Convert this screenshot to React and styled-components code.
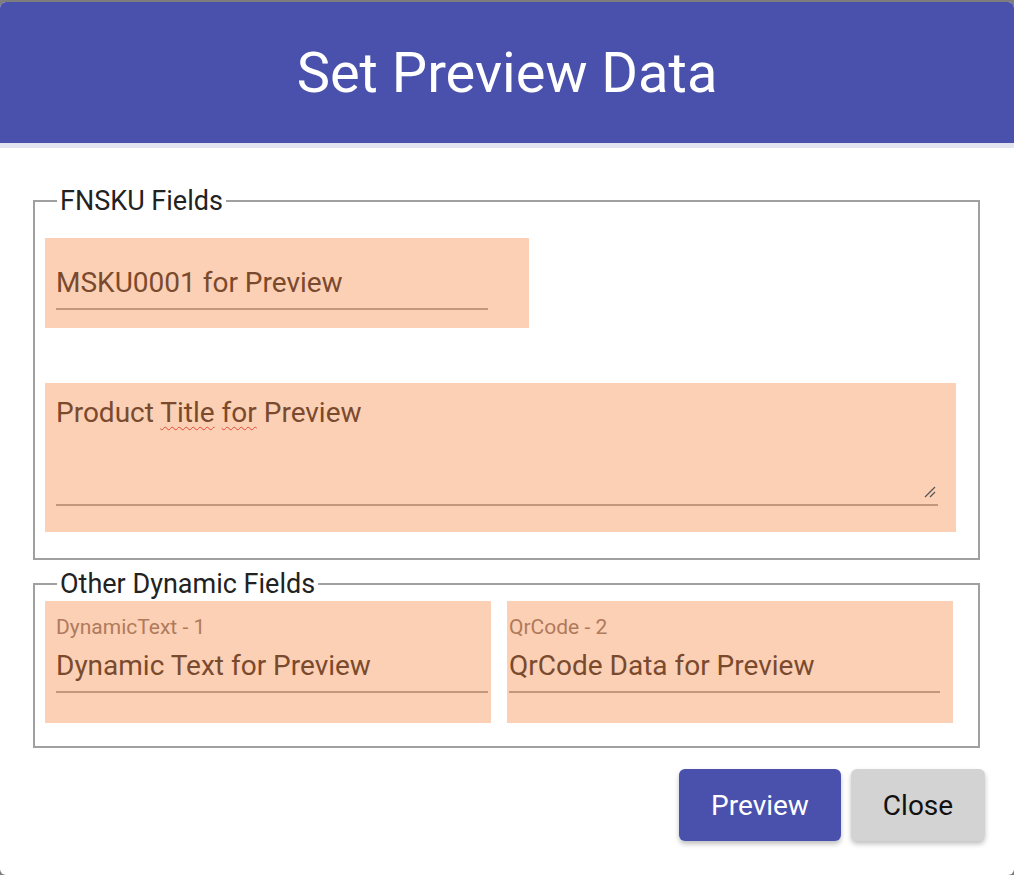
import React from 'react';
import styled, {createGlobalStyle} from 'styled-components';

const Global = createGlobalStyle`
  body {
    margin: 0;
    background: #7d7d7d;
    font-family: Roboto, "Liberation Sans", sans-serif;
  }
`;

const Dialog = styled.div`
  box-sizing: border-box;
  width: 1014px;
  height: 873px;
  margin-top: 2px;
  background: #fff;
  border-radius: 6px;
  overflow: hidden;
  display: flex;
  flex-direction: column;
`;

const Header = styled.header`
  height: 141px;
  background: #4a51ad;
  color: #fff;
  display: flex;
  align-items: center;
  justify-content: center;
  font-size: 56px;
  border-bottom: 5px solid #e1e4ee;
`;

const Body = styled.div`
  padding: 40px 34px 0 33px;
  display: flex;
  flex-direction: column;
  gap: 11px;
`;

const Group = styled.fieldset`
  margin: 0;
  border: 2px solid #a0a0a0;
  padding: ${(p) => p.$pad};
  display: flex;
  flex-direction: ${(p) => p.$dir};
  gap: ${(p) => p.$gap};
  align-items: flex-start;
`;

const Legend = styled.legend`
  font-size: 27px;
  color: #222;
  padding: 0 3px;
  margin-left: 12px;
  line-height: 26px;
`;

const Field = styled.label`
  box-sizing: border-box;
  display: flex;
  flex-direction: column;
  justify-content: flex-end;
  background: #fcd0b4;
  width: ${(p) => p.$w};
  height: ${(p) => p.$h};
  padding: 0 ${(p) => p.$pr} 0 ${(p) => p.$pl || '11px'};
`;

const Small = styled.span`
  font-size: 21px;
  color: #b07a5c;
  margin-bottom: 10px;
`;

const Value = styled.div`
  position: relative;
  font-size: 28px;
  color: #7a4a2e;
  border-bottom: 2px solid #c2977c;
  height: ${(p) => p.$h};
  margin-bottom: ${(p) => p.$mb};
`;

const Squiggle = styled.span`
  text-decoration: underline wavy #e04a3a;
  text-decoration-thickness: 1px;
  text-underline-offset: 4px;
`;

const Grip = styled.svg`
  position: absolute;
  right: 2px;
  bottom: 6px;
`;

const Actions = styled.div`
  display: flex;
  justify-content: flex-end;
  gap: 10px;
  padding: 21px 29px 0 0;
`;

const Button = styled.button`
  height: 72px;
  width: ${(p) => p.$w};
  border: none;
  border-radius: 6px;
  font-family: inherit;
  font-size: 28px;
  background: ${(p) => (p.$primary ? '#4a51ad' : '#d3d3d3')};
  color: ${(p) => (p.$primary ? '#fff' : '#111')};
  box-shadow: 0 3px 5px rgba(0, 0, 0, 0.25);
`;

export default function App() {
  return (
    <>
      <Global />
      <Dialog>
        <Header>Set Preview Data</Header>
        <Body>
          <Group $dir="column" $gap="55px" $pad="24px 21px 26px 10px">
            <Legend>FNSKU Fields</Legend>
            <Field $w="484px" $h="90px" $pr="41px">
              <Value $h="42px" $mb="18px">MSKU0001 for Preview</Value>
            </Field>
            <Field $w="911px" $h="149px" $pr="18px">
              <Value $h="108px" $mb="26px">
                Product <Squiggle>Title</Squiggle> <Squiggle>for</Squiggle> Preview
                <Grip width="14" height="14" viewBox="0 0 14 14">
                  <path d="M13 3 L3 13 M13 8 L8 13" stroke="#555" strokeWidth="1.2" />
                </Grip>
              </Value>
            </Field>
          </Group>
          <Group $dir="row" $gap="16px" $pad="4px 22px 23px 10px">
            <Legend>Other Dynamic Fields</Legend>
            <Field $w="446px" $h="122px" $pr="3px">
              <Small>DynamicText - 1</Small>
              <Value $h="42px" $mb="30px">Dynamic Text for Preview</Value>
            </Field>
            <Field $w="446px" $h="122px" $pr="13px" $pl="2px">
              <Small>QrCode - 2</Small>
              <Value $h="42px" $mb="30px">QrCode Data for Preview</Value>
            </Field>
          </Group>
        </Body>
        <Actions>
          <Button $primary $w="162px">Preview</Button>
          <Button $w="134px">Close</Button>
        </Actions>
      </Dialog>
    </>
  );
}
